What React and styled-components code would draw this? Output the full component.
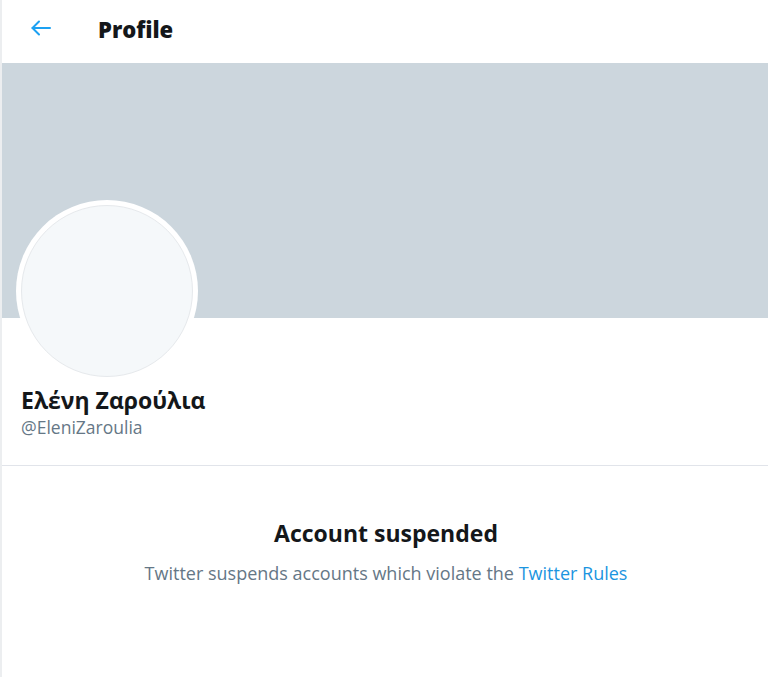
import React from 'react'
import styled, { createGlobalStyle } from 'styled-components'

const GlobalStyle = createGlobalStyle`
    html, body {
        margin: 0;
        padding: 0;
        background: #fff;
        font-family: "Open Sans", "Noto Sans", sans-serif;
    }
`

const Page = styled.div`
    width: 768px;
    height: 677px;
    display: flex;
    flex-direction: column;
    border-left: 2px solid #eceef0;
    box-sizing: border-box;
    background: #fff;
    overflow: hidden;
`

const Header = styled.div`
    height: 63px;
    display: flex;
    align-items: center;
    padding-left: 26px;
    gap: 44px;
    box-sizing: border-box;
`

const BackButton = styled.div`
    width: 26px;
    height: 26px;
    display: flex;
    align-items: center;
    justify-content: center;
    margin-top: -8px;
`

const Title = styled.h1`
    margin: 0;
    margin-top: -5px;
    font-size: 22px;
    font-weight: 800;
    color: #14171a;
`

const Banner = styled.div`
    height: 255px;
    background: #ccd6dd;
    flex-shrink: 0;
`

const ProfileInfo = styled.div`
    padding: 0 0 0 19px;
    display: flex;
    flex-direction: column;
    height: 148px;
    box-sizing: border-box;
    border-bottom: 1px solid #e1e4ea;
`

const Avatar = styled.div`
    width: 182px;
    height: 182px;
    margin-top: -118px;
    margin-left: -5px;
    border-radius: 50%;
    background: #fff;
    padding: 5px;
    box-sizing: border-box;
`

const AvatarInner = styled.div`
    width: 100%;
    height: 100%;
    border-radius: 50%;
    background: #f5f8fa;
    border: 1px solid #e6e9ec;
    box-sizing: border-box;
`

const Name = styled.div`
    margin-top: 3px;
    font-size: 23px;
    font-weight: 700;
    color: #14171a;
    line-height: 30px;
`

const Handle = styled.div`
    margin-top: 1px;
    font-size: 17.5px;
    color: #657786;
    line-height: 22px;
`

const Notice = styled.div`
    display: flex;
    flex-direction: column;
    align-items: center;
    padding-top: 51px;
    gap: 12px;
`

const NoticeTitle = styled.div`
    font-size: 23px;
    font-weight: 700;
    color: #14171a;
    margin-left: 2px;
`

const NoticeText = styled.div`
    font-size: 18px;
    color: #657786;
    margin-left: 2px;
`

const Link = styled.a`
    color: #1b95e0;
    text-decoration: none;
`

export default function App() {
    return (
        <Page>
            <GlobalStyle />
            <Header>
                <BackButton>
                    <svg width="24" height="24" viewBox="0 0 24 24" fill="none" stroke="#1da1f2" strokeWidth="2" strokeLinecap="round" strokeLinejoin="round">
                        <path d="M21 12H3.5" />
                        <path d="M10 5.5L3.5 12l6.5 6.5" />
                    </svg>
                </BackButton>
                <Title>Profile</Title>
            </Header>
            <Banner />
            <ProfileInfo>
                <Avatar>
                    <AvatarInner />
                </Avatar>
                <Name>Ελένη Ζαρούλια</Name>
                <Handle>@EleniZaroulia</Handle>
            </ProfileInfo>
            <Notice>
                <NoticeTitle>Account suspended</NoticeTitle>
                <NoticeText>
                    Twitter suspends accounts which violate the <Link href="#">Twitter Rules</Link>
                </NoticeText>
            </Notice>
        </Page>
    )
}
